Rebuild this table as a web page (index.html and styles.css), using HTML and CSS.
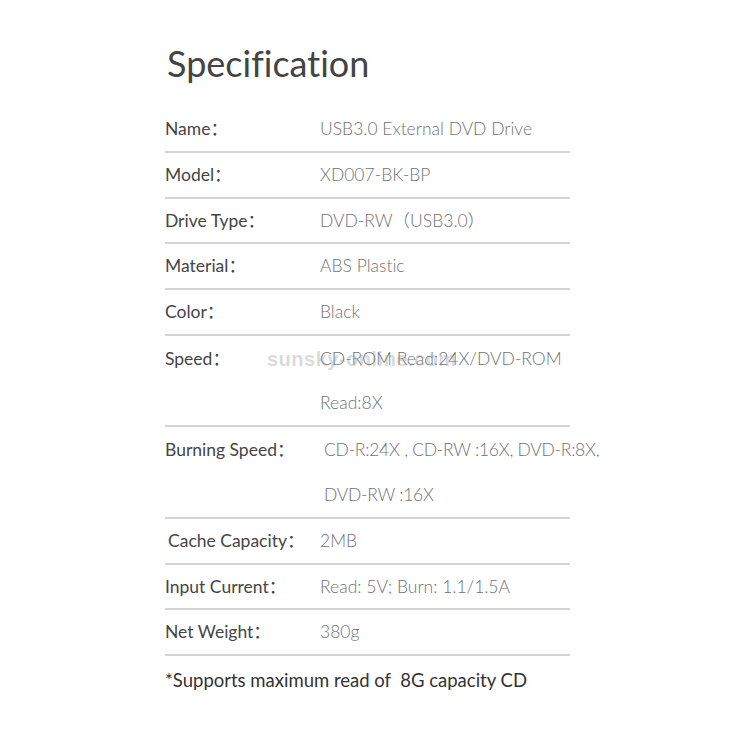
FILE: index.html
```html
<!DOCTYPE html>
<html lang="en">
<head>
<meta charset="utf-8">
<title>Specification</title>
<link rel="stylesheet" href="styles.css">
</head>
<body>
<div class="page">
  <h1 class="title">Specification</h1>
  <div class="spec">
    <div class="row"><div class="label">Name：</div><div class="value">USB3.0 External DVD Drive</div></div>
    <div class="row"><div class="label">Model：</div><div class="value">XD007-BK-BP</div></div>
    <div class="row"><div class="label">Drive Type：</div><div class="value">DVD-RW（USB3.0）</div></div>
    <div class="row"><div class="label">Material：</div><div class="value">ABS Plastic</div></div>
    <div class="row"><div class="label">Color：</div><div class="value">Black</div></div>
    <div class="row tall"><div class="label">Speed：</div><div class="value">CD-ROM Read:24X/DVD-ROM<br>Read:8X</div><span class="watermark">sunsky-online.com</span></div>
    <div class="row tall"><div class="label wide">Burning Speed：</div><div class="value narrow">CD-R:24X , CD-RW :16X, DVD-R:8X,<br>DVD-RW :16X</div></div>
    <div class="row"><div class="label indent">Cache Capacity：</div><div class="value">2MB</div></div>
    <div class="row"><div class="label">Input Current：</div><div class="value">Read: 5V; Burn: 1.1/1.5A</div></div>
    <div class="row"><div class="label">Net Weight：</div><div class="value">380g</div></div>
  </div>
  <p class="note">*Supports maximum read of&nbsp; 8G capacity CD</p>
</div>
</body>
</html>
```
FILE: styles.css
```css
html, body {
  margin: 0;
  padding: 0;
  background: #ffffff;
}
body {
  font-family: Lato, "Noto Sans CJK SC", sans-serif;
  font-variant-ligatures: no-common-ligatures;
}
.page {
  padding: 40px 0 0 165px;
  width: 405px;
}
.title {
  margin: 0 0 21px 2px;
  font-size: 36px;
  font-weight: 400;
  line-height: 46px;
  color: #444444;
}
.spec {
  width: 405px;
}
.row {
  position: relative;
  display: flex;
  border-bottom: 2px solid #d4d4d4;
  font-size: 17.5px;
  padding-top: 2px;
  line-height: 40.5px;
  padding-bottom: 1.25px;
}
.row.tall {
  padding-top: 1px;
  line-height: 44.25px;
  padding-bottom: 0;
}
.label {
  width: 155px;
  flex: none;
  color: #454545;
  font-weight: 400;
}
.label.wide {
  width: 159px;
}
.label.indent {
  padding-left: 3px;
  width: 152px;
}
.value {
  color: #727272;
  font-weight: 300;
  white-space: nowrap;
}
.value.narrow {
  letter-spacing: -0.25px;
}
.watermark {
  position: absolute;
  left: 102px;
  top: 11px;
  font-family: "Liberation Sans", Arial, sans-serif;
  font-weight: 700;
  font-size: 20px;
  line-height: 24px;
  letter-spacing: 0.5px;
  color: rgba(150, 150, 150, 0.35);
  pointer-events: none;
}
.note {
  margin: 12px 0 0 0;
  font-size: 18.5px;
  line-height: 24px;
  color: #333333;
}
```
